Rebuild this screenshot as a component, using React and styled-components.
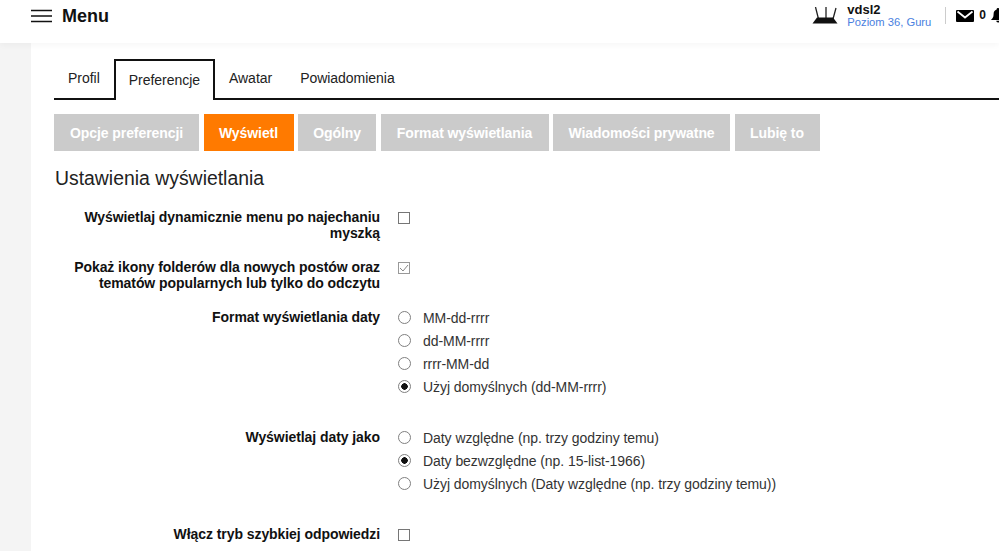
import styled, { createGlobalStyle } from "styled-components";
import { useState } from "react";

const GlobalStyle = createGlobalStyle`
  html, body {
    margin: 0;
    padding: 0;
    height: 551px;
    overflow: hidden;
    background: #f4f4f4;
    font-family: "Liberation Sans", Arial, sans-serif;
  }
`;

const dateFormats = [
  { label: "MM-dd-rrrr" },
  { label: "dd-MM-rrrr" },
  { label: "rrrr-MM-dd" },
  { label: "Użyj domyślnych (dd-MM-rrrr)", checked: true },
];

const dateModes = [
  { label: "Daty względne (np. trzy godziny temu)" },
  { label: "Daty bezwzględne (np. 15-list-1966)", checked: true },
  { label: "Użyj domyślnych (Daty względne (np. trzy godziny temu))" },
];

const subTabs = [
  { label: "Opcje preferencji", width: 145 },
  { label: "Wyświetl", width: 90, active: true },
  { label: "Ogólny", width: 78 },
  { label: "Format wyświetlania", width: 168 },
  { label: "Wiadomości prywatne", width: 177 },
  { label: "Lubię to", width: 85 },
];

function RadioGroup({ options }) {
  return (
    <RadioList>
      {options.map((o) => (
        <RadioRow key={o.label}>
          <Radio $checked={o.checked} />
          <span>{o.label}</span>
        </RadioRow>
      ))}
    </RadioList>
  );
}

function App() {
  const [tab] = useState("Preferencje");

  return (
    <>
      <GlobalStyle />
      <Header>
        <MenuBlock>
          <svg width="22" height="14" viewBox="0 0 22 14">
            <path d="M0 1.5h21M0 7h21M0 12.5h21" stroke="#111" strokeWidth="1.6" fill="none" />
          </svg>
          <MenuText>Menu</MenuText>
        </MenuBlock>
        <UserBlock>
          <RouterIcon width="26" height="18" viewBox="0 0 26 18">
            <path d="M3.5 0L6.5 12M14 0v11M24 1l-3 11" stroke="#222" strokeWidth="1.3" fill="none" />
            <path d="M5 10.5h16l4.500 6H0.500z" fill="#111" />
          </RouterIcon>
          <UserText>
            <UserName>vdsl2</UserName>
            <UserRank>Poziom 36, Guru</UserRank>
          </UserText>
          <Divider />
          <MailIcon width="18" height="12" viewBox="0 0 18 12">
            <rect width="18" height="12" rx="1" fill="#000" />
            <path d="M1.500 1.500L9 7.500l7.500-6" stroke="#fff" strokeWidth="1.8" fill="none" />
          </MailIcon>
          <Count>0</Count>
          <BellIcon width="16" height="15" viewBox="0 0 16 17">
            <path d="M8 0a1.500 1.500 0 0 1 1.500 1.700C12 2.400 13 4.500 13 7c0 3.500 1 4.500 3 6.500H0C2 11.500 3 10.500 3 7c0-2.500 1-4.600 3.500-5.300A1.500 1.500 0 0 1 8 0zM6 14.500h4a2 2 0 0 1-4 0z" fill="#000" />
          </BellIcon>
        </UserBlock>
      </Header>
      <Main>
        <Tabs>
          {["Profil", "Preferencje", "Awatar", "Powiadomienia"].map((t) => (
            <Tab key={t} $active={t === tab}>{t}</Tab>
          ))}
        </Tabs>
        <SubTabs>
          {subTabs.map((s) => (
            <SubTab key={s.label} $active={s.active} $width={s.width}>{s.label}</SubTab>
          ))}
        </SubTabs>
        <Title>Ustawienia wyświetlania</Title>
        <Form>
          <Row $height={50}>
            <Label>Wyświetlaj dynamicznie menu po najechaniu myszką</Label>
            <Check />
          </Row>
          <Row $height={50}>
            <Label>Pokaż ikony folderów dla nowych postów oraz tematów popularnych lub tylko do odczytu</Label>
            <Check $checked>
              <svg width="10" height="8" viewBox="0 0 10 8">
                <path d="M1 4l3 3 5-6" stroke="#888" strokeWidth="1" fill="none" />
              </svg>
            </Check>
          </Row>
          <Row $height={120}>
            <Label>Format wyświetlania daty</Label>
            <RadioGroup options={dateFormats} />
          </Row>
          <Row $height={97}>
            <Label>Wyświetlaj daty jako</Label>
            <RadioGroup options={dateModes} />
          </Row>
          <Row $height={30}>
            <Label>Włącz tryb szybkiej odpowiedzi</Label>
            <Check />
          </Row>
        </Form>
      </Main>
    </>
  );
}

export default App;

const Header = styled.header`
  height: 43px;
  background: #fff;
  display: flex;
  justify-content: space-between;
  box-shadow: 0 2px 6px rgba(0, 0, 0, 0.04);
  position: relative;
  overflow: hidden;
  white-space: nowrap;
`;

const MenuBlock = styled.div`
  display: flex;
  align-items: flex-start;
  gap: 9px;
  padding: 9px 0 0 31px;
`;

const MenuText = styled.span`
  font-size: 18px;
  font-weight: 700;
  line-height: 15px;
  color: #111;
`;

const UserBlock = styled.div`
  display: flex;
  align-items: flex-start;
  padding: 4px 0 0 0;
  margin-right: -7px;
`;

const RouterIcon = styled.svg`
  margin: 3px 9px 0 0;
`;

const MailIcon = styled.svg`
  margin: 6px 0 0 0;
`;

const BellIcon = styled.svg`
  margin: 4px 0 0 4px;
`;

const UserText = styled.div`
  display: flex;
  flex-direction: column;
`;

const UserName = styled.span`
  font-size: 13px;
  font-weight: 700;
  line-height: 12px;
  color: #111;
`;

const UserRank = styled.span`
  font-size: 11.2px;
  line-height: 14px;
  margin-top: -1px;
  color: #4a7fe0;
`;

const Divider = styled.div`
  width: 1px;
  height: 17px;
  background: #ccc;
  margin: 3px 10px 0 14px;
`;

const Count = styled.span`
  font-size: 12px;
  font-weight: 700;
  margin: 4px 0 0 5px;
  color: #111;
`;

const Main = styled.main`
  margin-left: 31px;
  height: 508px;
  padding: 16px 0 0 23px;
  background: #fff;
  overflow: hidden;
`;

const Tabs = styled.nav`
  display: flex;
  align-items: flex-start;
  border-bottom: 2px solid #111;
  height: 39px;
`;

const Tab = styled.div`
  font-size: 14px;
  letter-spacing: -0.03px;
  color: #222;
  white-space: nowrap;
  box-sizing: border-box;
  padding: ${(p) => (p.$active ? "11px 13px 0" : "11px 14px 0")};
  height: ${(p) => (p.$active ? "41px" : "39px")};
  line-height: 16px;
  ${(p) =>
    p.$active &&
    `
    background: #fff;
    border: 2px solid #111;
    border-bottom: none;
  `}
`;

const SubTabs = styled.div`
  display: flex;
  gap: 4.5px;
  margin-top: 14px;
`;

const SubTab = styled.div`
  width: ${(p) => p.$width}px;
  height: 37px;
  flex: none;
  display: flex;
  align-items: center;
  justify-content: center;
  font-size: 14px;
  font-weight: 700;
  letter-spacing: -0.08px;
  color: #fff;
  white-space: nowrap;
  background: ${(p) => (p.$active ? "#ff7a00" : "#cbcbcb")};
`;

const Title = styled.h2`
  margin: 16px 0 0 1px;
  font-size: 19.4px;
  font-weight: 400;
  line-height: 22px;
  color: #222;
`;

const Form = styled.div`
  margin-top: 21px;
  display: flex;
  flex-direction: column;
`;

const Row = styled.div`
  height: ${(p) => p.$height}px;
  display: flex;
  align-items: flex-start;
  gap: 18px;
`;

const Label = styled.div`
  width: 326px;
  flex: none;
  text-align: right;
  font-size: 14px;
  font-weight: 700;
  letter-spacing: -0.07px;
  line-height: 15.5px;
  color: #111;
`;

const Check = styled.div`
  width: 10px;
  height: 10px;
  margin: 2px 0 0 0;
  background: #fff;
  border: 1px solid ${(p) => (p.$checked ? "#999" : "#767676")};
  display: flex;
  align-items: center;
  justify-content: center;
`;

const RadioList = styled.div`
  display: flex;
  flex-direction: column;
  gap: 5px;
  margin-top: -1px;
`;

const RadioRow = styled.div`
  display: flex;
  align-items: center;
  gap: 12px;
  height: 18px;
  font-size: 14px;
  letter-spacing: -0.06px;
  color: #333;
  white-space: nowrap;
`;

const Radio = styled.span`
  width: 11px;
  height: 11px;
  border: 1px solid #808080;
  border-radius: 50%;
  background: ${(p) => (p.$checked ? "radial-gradient(circle, #111 0 3px, #fff 3.5px)" : "#fff")};
  flex: none;
  margin-top: -1px;
`;
